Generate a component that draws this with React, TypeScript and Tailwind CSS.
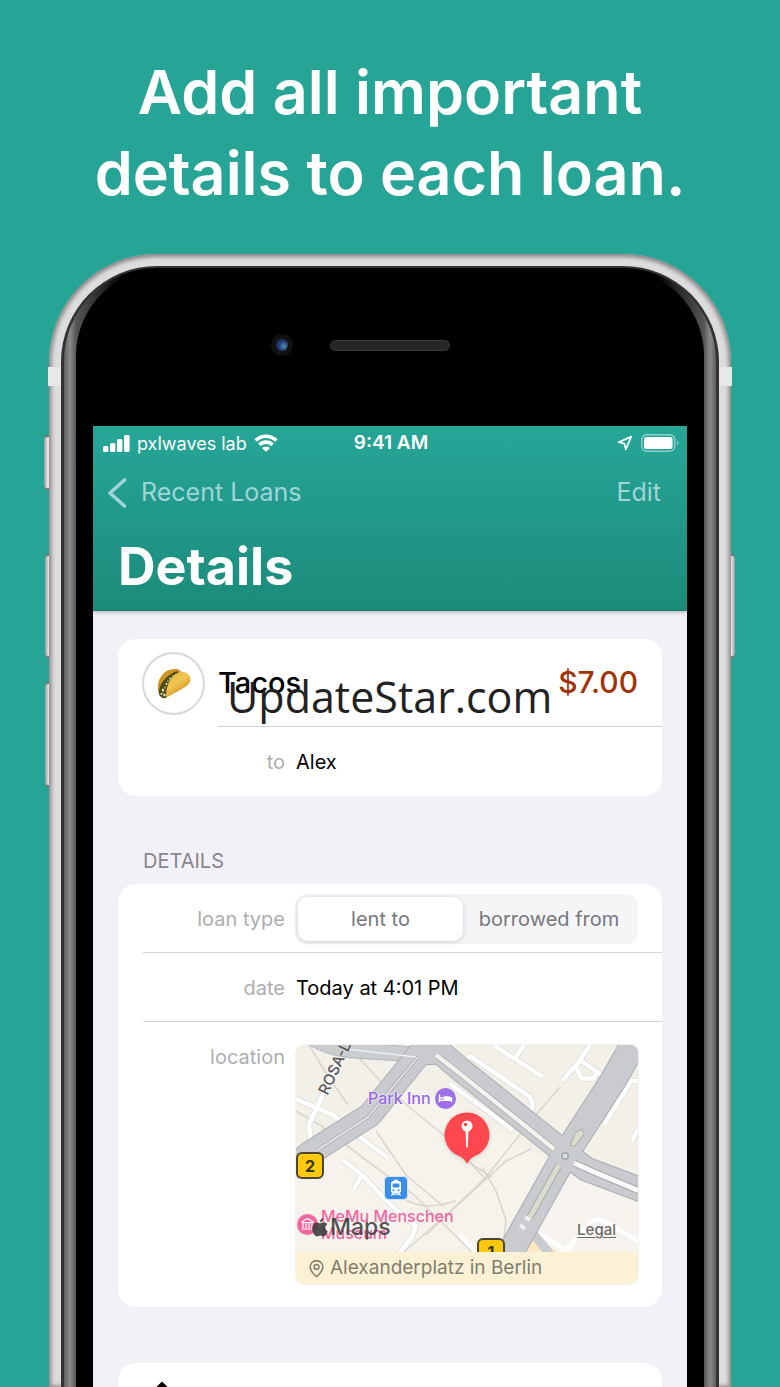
import React, { useState } from 'react';
import { MapPin } from 'lucide-react';

const roads = {
  main: 'M-6 124 L14 108 L74 70 L124 8 L144 7 L164 24 L264 104 L290 124 L348 146',
  cross: 'M344 -12 L318 34 L269 110 L212 212',
};

function SignalIcon() {
  return (
    <svg className="h-[17px] w-[27px]" viewBox="0 0 27 17" fill="#fff" aria-hidden="true">
      <rect x="0" y="11" width="5.4" height="6" rx="1.5" />
      <rect x="7" y="8" width="5.4" height="9" rx="1.5" />
      <rect x="14" y="4" width="5.4" height="13" rx="1.5" />
      <rect x="21" y="0" width="5.6" height="17" rx="1.5" />
    </svg>
  );
}

function WifiIcon() {
  return (
    <svg className="h-[18px] w-6" viewBox="0 0 24 18" aria-hidden="true">
      <g fill="none" stroke="#fff" strokeWidth="3.6">
        <path d="M1.6 6.6 C7.4 .8 16.6 .8 22.4 6.6" />
        <path d="M5.4 10.8 C9.2 7.2 14.8 7.2 18.6 10.8" />
      </g>
      <path d="M12 17.8 L8 13.9 C10 12.2 14 12.2 16 13.9 Z" fill="#fff" />
    </svg>
  );
}

function StatusBar() {
  return (
    <div className="flex h-[34px] items-center pl-2.5 pr-2 text-white">
      <div className="flex flex-1 items-center gap-[7px]">
        <SignalIcon />
        <span className="whitespace-nowrap text-[18px]">pxlwaves lab</span>
        <WifiIcon />
      </div>
      <span className="text-[19px] font-semibold">9:41 AM</span>
      <div className="flex flex-1 items-center justify-end gap-2">
        <svg className="size-4" viewBox="0 0 16 16" fill="none" aria-hidden="true">
          <path d="M14.3 1.6 L1.6 7.2 L7.4 8.6 L8.8 14.4 Z" stroke="#fff" strokeWidth="1.7" strokeLinejoin="round" />
        </svg>
        <svg className="h-[18px] w-[38px]" viewBox="0 0 38 18" aria-hidden="true">
          <rect x=".8" y=".8" width="33" height="16.4" rx="5" fill="none" stroke="#fff" strokeOpacity=".5" strokeWidth="1.4" />
          <rect x="3" y="3" width="28.6" height="12" rx="2.8" fill="#fff" />
          <path d="M36 6.5 C38 7.5 38 10.5 36 11.5 Z" fill="#fff" fillOpacity=".5" />
        </svg>
      </div>
    </div>
  );
}

function TacoIcon() {
  return (
    <svg className="h-8 w-9" viewBox="0 0 36 32" aria-hidden="true">
      <defs>
        <linearGradient id="shell" x1="0" y1="0" x2=".6" y2="1">
          <stop offset="0" stopColor="#e6b23c" />
          <stop offset=".5" stopColor="#f0c650" />
          <stop offset="1" stopColor="#c98718" />
        </linearGradient>
      </defs>
      <path d="M2 22 C1 10 10 1 20 2 C23 2 25 4 26 6 L8 30 C4 30 2 26 2 22 Z" fill="#cf9426" />
      <path d="M3 27 C2 18 10 8 21 4 L24 7 C15 11 14 21 10 31 C7 32 4 30 3 27 Z" fill="#4f4a1c" />
      <g fill="#f4e8bd">
        <circle cx="7" cy="23" r="1.2" />
        <circle cx="8.5" cy="28" r="1.2" />
        <circle cx="10.5" cy="17" r="1" />
        <circle cx="14" cy="11.5" r=".9" />
        <circle cx="5.5" cy="27" r="1" />
      </g>
      <g fill="#7e9a35">
        <circle cx="9" cy="20.5" r="1.3" />
        <circle cx="12" cy="14" r="1.2" />
        <circle cx="6.8" cy="25.4" r=".9" />
        <circle cx="16.5" cy="9" r="1.1" />
      </g>
      <g fill="#a8442a">
        <circle cx="10.5" cy="24" r="1.2" />
        <circle cx="13" cy="17" r="1" />
      </g>
      <path d="M10 31 C10 19 15 6 25 5 C32 4 36 10 34 15 C32 20 18 26 10 31 Z" fill="url(#shell)" />
    </svg>
  );
}

function MapDrawing() {
  return (
    <svg className="absolute inset-0 size-full" viewBox="0 0 342 207" preserveAspectRatio="xMidYMid slice" aria-hidden="true">
      <rect width="342" height="207" fill="#f3f0e8" />
      <path d="M0 110 L60 90 L110 40 L160 60 L250 115 L200 207 L0 207 Z" fill="#f6f3ed" />
      <path d="M270 118 L342 150 V207 H220 Z" fill="#f7f4ef" />
      <path d="M222 207 L236 190 L262 207 Z" fill="#fbe9c4" />

      {/* footpaths */}
      <g fill="none" stroke="#d8d6cf" strokeWidth="1.6">
        <path d="M0 66 L24 80 L74 118 L118 150 L176 207" />
        <path d="M13 0 L30 28 L52 60 M62 12 L88 40 L118 66 L155 96 L190 135" />
        <path d="M264 42 L238 72 L190 132 L130 190" />
        <path d="M235 104 L210 116 L164 158 L108 207" />
        <path d="M174 118 L196 132 M80 86 L110 130 L148 162 M186 122 L200 146 L210 175 L208 192" />
        <path d="M110 155 C124 163 140 162 160 156" />
      </g>

      {/* side streets */}
      <g fill="none" stroke="#dddcd8" strokeWidth="6" strokeLinejoin="round">
        <path d="M0 54 L37 70 L57 87 L91 112" />
        <path d="M15 100 L13 80 L37 27 L54 -6" />
        <path d="M46 114 L66 130 L100 165 L120 181 L116 192 L102 210 M66 130 L58 144" />
        <path d="M197 0 L247 32 M228 0 L220 12" />
        <path d="M167 17 L174 11 L234 52 L237 60 L234 68" />
        <path d="M153 38 L217 85" />
        <path d="M294 0 L282 18 L266 36 M282 14 L306 30 M280 22 L285 33 L297 34 L302 26" />
        <path d="M342 36 L335 36 L308 80 M342 84 L336 96" />
      </g>
      <g fill="none" stroke="#fff" strokeWidth="4.5" strokeLinejoin="round">
        <path d="M0 54 L37 70 L57 87 L91 112" />
        <path d="M15 100 L13 80 L37 27 L54 -6" />
        <path d="M46 114 L66 130 L100 165 L120 181 L116 192 L102 210 M66 130 L58 144" />
        <path d="M197 0 L247 32 M228 0 L220 12" />
        <path d="M167 17 L174 11 L234 52 L237 60 L234 68" />
        <path d="M153 38 L217 85" />
        <path d="M294 0 L282 18 L266 36 M282 14 L306 30 M280 22 L285 33 L297 34 L302 26" />
        <path d="M342 36 L335 36 L308 80 M342 84 L336 96" />
        <path d="M284 110 L342 136" />
        <path d="M240 186 L270 206 L296 176 L304 174 L346 198" />
        <path d="M164 190 L184 212" />
      </g>
      <path d="M232 182 L256 212" stroke="#c9cccf" strokeWidth="9" />

      {/* main roads */}
      <g fill="none" strokeLinejoin="round">
        <path d="M18 -6 C44 8 60 5 84 7 L124 10" stroke="#b1b6bb" strokeWidth="16" />
        <path d="M18 -6 C44 8 60 5 84 7 L124 10" stroke="#cbced1" strokeWidth="14" />
        <path d={roads.cross} stroke="#a9adb2" strokeWidth="27" />
        <path d={roads.main} stroke="#a9adb2" strokeWidth="25" />
        <path d={roads.cross} stroke="#c9cbce" strokeWidth="25" />
        <path d={roads.main} stroke="#c9cbce" strokeWidth="23" />
        <path d="M50 4 L120 12" stroke="#eef0f0" strokeWidth="1.5" />
        <path d="M20 106 L72 72 L122 12" stroke="#9fa4a9" strokeWidth="3" />
        <path d="M20 106 L72 72 L122 12" stroke="#e9ebec" strokeWidth="1.6" />
        <path d="M140 10 L162 27 L258 104" stroke="#a6abaf" strokeWidth="6" />
        <path d="M140 10 L162 27 L258 104" stroke="#f3f2ee" strokeWidth="4.4" />
        <path d="M278 118 L298 127 L346 147" stroke="#a6abaf" strokeWidth="7" />
        <path d="M278 118 L298 127 L346 147" stroke="#fafafa" strokeWidth="5" />
        <path d="M263 120 L234 172" stroke="#a6abaf" strokeWidth="7" />
        <path d="M263 120 L234 172" stroke="#dbdccb" strokeWidth="5" />
        <path d="M274 101 L279 88 L286 84 L288 89 L279 101 Z" fill="#dcddcb" stroke="#a6abaf" />
        <rect x="266" y="108" width="6" height="6" rx="2" fill="#d9dcde" stroke="#a0a5aa" strokeWidth="1.5" />
        <path d="M229 172 L234 175 M224 180 L229 184" stroke="#eef1f2" strokeWidth="4" />
      </g>
    </svg>
  );
}

function RouteBadge({ children }: { children: React.ReactNode }) {
  return (
    <span className="flex h-[27px] w-7 items-center justify-center rounded-md border-2 border-[#4c4633] bg-[#fdc90f] text-[16px] font-bold text-[#3c3724]">
      {children}
    </span>
  );
}

function LoanMap() {
  return (
    <div className="overflow-hidden rounded-lg ring-1 ring-black/5">
      <div className="relative h-[207px] overflow-hidden">
        <MapDrawing />
        <span className="absolute left-[11px] top-3 -rotate-65 whitespace-nowrap text-[15px] font-medium text-[#55565a]">ROSA-L</span>
        <span className="absolute left-[72px] top-[41px] flex items-center gap-1 whitespace-nowrap text-[16px] font-medium text-[#9265e8] [text-shadow:0_0_2px_#fff,0_0_2px_#fff]">
          Park Inn
          <svg className="size-[21px]" viewBox="0 0 21 21" aria-hidden="true">
            <circle cx="10.5" cy="10.5" r="10.5" fill="#9b70e8" />
            <path d="M4.5 6.5 V14 M4.5 12.3 H16.5 V14 M16.5 12 V10 L10 8.6 V12 M5.5 9.8 H9.5" stroke="#fff" strokeWidth="1.5" fill="none" />
            <path d="M9.5 8.6 H14.5 L16.5 10 V12 H9.5 Z" fill="#fff" />
          </svg>
        </span>
        <span className="absolute left-0 top-[107px]"><RouteBadge>2</RouteBadge></span>
        <span className="absolute left-[181px] top-[193px]"><RouteBadge>1</RouteBadge></span>
        <svg className="absolute left-[88px] top-[131px] size-6" viewBox="0 0 24 24" aria-hidden="true">
          <rect x=".5" y=".5" width="23" height="23" rx="4" fill="#3a8eea" stroke="#d7e6f8" />
          <rect x="7" y="5" width="10" height="12" rx="2.5" fill="#fff" />
          <rect x="8.6" y="7.5" width="6.8" height="4" rx=".6" fill="#3a8eea" />
          <circle cx="9.4" cy="14.2" r="1" fill="#3a8eea" />
          <circle cx="14.6" cy="14.2" r="1" fill="#3a8eea" />
          <path d="M9 17 L7.5 19.5 M15 17 L16.5 19.5 M8.5 18.2 H15.5 M10 4.5 H14" stroke="#fff" strokeWidth="1.3" />
        </svg>
        <svg className="absolute left-[145px] top-[63px] h-[62px] w-[52px] drop-shadow-sm" viewBox="0 0 52 62" aria-hidden="true">
          <path d="M26 56 C24 52 22 50 18 48 A22.5 22.5 0 1 1 34 48 C30 50 28 52 26 56 Z" fill="#fe484f" />
          <circle cx="26" cy="18" r="5.5" fill="#fff" />
          <circle cx="24.5" cy="16.5" r="1.8" fill="#fe484f" />
          <path d="M24.6 23 H27.4 L26.8 39 L26 40 L25.2 39 Z" fill="#fff" />
        </svg>
        <svg className="absolute left-px top-[169px] size-[21px]" viewBox="0 0 21 21" aria-hidden="true">
          <circle cx="10.5" cy="10.5" r="10.5" fill="#f2679f" />
          <path d="M4.5 8 L10.5 4.5 L16.5 8 M4.5 8.5 H16.5 M6 9 V14 M9 9 V14 M12 9 V14 M15 9 V14 M4.5 15 H16.5" stroke="#fff" strokeWidth="1.2" fill="none" />
        </svg>
        <span className="absolute left-[25px] top-[163px] w-36 text-[16px] font-medium leading-[17px] text-[#f067a0]">
          MeMu Menschen Museum
        </span>
        <span className="absolute left-4 top-[168px] flex items-center gap-0.5 text-[23px] font-medium leading-7 text-[#3e3e40]/90">
          <svg className="h-[19px] w-4" viewBox="0 0 16 19" fill="currentColor" aria-hidden="true">
            <path d="M8 5.2 C9.2 5.2 10.4 4.2 12 4.3 C13.3 4.4 14.6 5 15.3 6.2 C12.2 8.2 12.8 12 15.8 13.3 C15 15.8 13.2 18.4 11.6 18.4 C10.2 18.4 9.8 17.6 8.3 17.6 C6.7 17.6 6.2 18.4 4.9 18.4 C2.7 18.4 .2 14.2 .2 10.5 C.2 6.8 2.4 4.4 4.9 4.4 C6.2 4.4 7.2 5.2 8 5.2 Z" />
            <path d="M7.9 4.2 C7.7 2.2 9.4 .4 11.3 .1 C11.5 2.3 9.8 4.1 7.9 4.2 Z" />
          </svg>
          Maps
        </span>
        <a href="#legal" className="absolute right-[22px] top-[174px] text-[15px] font-medium text-[#6b6b6b] underline underline-offset-2">
          Legal
        </a>
      </div>
      <div className="flex h-8 items-center gap-1 whitespace-nowrap bg-[#fbf2d6] pl-[11px] text-[19px] text-[#827d6e]">
        <MapPin className="size-[19px]" strokeWidth={2} />
        Alexanderplatz in Berlin
      </div>
    </div>
  );
}

function LoanTypePicker() {
  const [type, setType] = useState('lent to');

  return (
    <div className="flex h-[50px] flex-1 rounded-xl bg-[#f5f5f8] p-[3px]">
      {['lent to', 'borrowed from'].map((option) => (
        <button
          key={option}
          type="button"
          aria-pressed={type === option}
          onClick={() => setType(option)}
          className={`whitespace-nowrap rounded-[10px] text-[20px] text-[#77777b] ${
            option === 'lent to' ? 'flex-1' : 'w-[172px]'
          } ${type === option ? 'bg-white shadow-[0_1px_5px_rgba(0,0,0,0.16)]' : ''}`}
        >
          {option}
        </button>
      ))}
    </div>
  );
}

function Screen() {
  return (
    <div className="relative min-h-full bg-[#f1f1f7]">
      <header className="h-[185px] border-b border-[#1a7d70] bg-linear-to-b from-[#26a697] to-[#1c8b7b] shadow-[0_1px_4px_rgba(0,0,0,0.3)]">
        <StatusBar />
        <nav className="flex h-[66px] items-center justify-between pl-3.5 pr-[26px] text-[25px] text-[#9fd5d6]">
          <button type="button" className="flex items-center gap-3.5">
            <svg className="h-8 w-5" viewBox="0 0 20 32" fill="none" aria-hidden="true">
              <path d="M17.5 3 L3 16 L17.5 29" stroke="currentColor" strokeWidth="3.6" strokeLinecap="round" strokeLinejoin="round" />
            </svg>
            Recent Loans
          </button>
          <button type="button">Edit</button>
        </nav>
        <h2 className="px-[25px] pt-[9px] text-[52px] font-bold leading-[64px] text-white">Details</h2>
      </header>

      <main className="px-[25px] text-[20px] text-black">
        <section className="mt-7 rounded-[18px] bg-white">
          <div className="flex h-[88px] items-center pl-6">
            <div className="flex size-[63px] shrink-0 items-center justify-center rounded-full border-2 border-[#d9d9dc]">
              <TacoIcon />
            </div>
            <div className="ml-[13px] flex h-full flex-1 items-center justify-between border-b border-[#d3d3d5] pr-6 font-medium">
              <span className="text-[29px]">Tacos</span>
              <span className="text-[30px] text-[#a13308]">$7.00</span>
            </div>
          </div>
          <div className="flex h-[69px] items-center gap-[11px] pl-[25px]">
            <span className="w-[142px] text-right text-[#adadb0]">to</span>
            <span>Alex</span>
          </div>
        </section>

        <h3 className="pl-[25px] pt-[52px] text-[20px] leading-[27px] text-[#87878c]">DETAILS</h3>
        <section className="mt-[9px] rounded-[18px] bg-white pb-[23px] pl-[25px]">
          <div className="flex h-[69px] items-center gap-[10px] border-b border-[#d3d3d5] pr-6 pt-0.5">
            <span className="w-[142px] text-right text-[#adadb0]">loan type</span>
            <LoanTypePicker />
          </div>
          <div className="flex h-[69px] items-center gap-[11px] border-b border-[#d3d3d5] pr-6 pt-0.5">
            <span className="w-[142px] text-right text-[#adadb0]">date</span>
            <span>Today at 4:01 PM</span>
          </div>
          <div className="flex gap-[11px] pr-6 pt-[23px]">
            <span className="w-[142px] text-right leading-6 text-[#adadb0]">location</span>
            <div className="min-w-0 flex-1">
              <LoanMap />
            </div>
          </div>
        </section>

        <section className="mt-14 h-24 rounded-[18px] bg-white pl-[30px] pt-[18px]">
          <svg className="h-[31px] w-7" viewBox="0 0 28 31" fill="none" stroke="#000" strokeWidth="3" aria-hidden="true">
            <path d="M14 23 V3 M8 8.5 L14 2.5 L20 8.5 M9 11 H3 V29 H25 V11 H19" />
          </svg>
        </section>
      </main>

      <p className="pointer-events-none absolute left-[134px] top-[241px] whitespace-nowrap font-['Open_Sans',sans-serif] text-[43px] leading-[60px] text-[#222]">
        UpdateStar.com
      </p>
    </div>
  );
}

function Phone() {
  return (
    <div className="relative ml-12 mr-[49px] mt-10 flex min-h-0 flex-1 flex-col">
      <span className="absolute -left-1 top-[181px] h-[55px] w-2 rounded-l-sm border-y-2 border-[#777] bg-linear-to-r from-[#999] via-[#eee] to-[#aaa]" />
      <span className="absolute -left-[3px] top-[300px] h-[104px] w-2 rounded-l-sm border-y-2 border-[#777] bg-linear-to-r from-[#999] via-[#eee] to-[#aaa]" />
      <span className="absolute -left-[3px] top-[428px] h-[105px] w-2 rounded-l-sm border-y-2 border-[#777] bg-linear-to-r from-[#999] via-[#eee] to-[#aaa]" />
      <span className="absolute -right-1 top-[300px] h-[104px] w-2 rounded-r-sm border-y-2 border-[#777] bg-linear-to-r from-[#aaa] via-[#eee] to-[#999]" />

      <div className="relative ml-px flex min-h-0 flex-1 flex-col rounded-t-[108px] bg-[#dedddd] px-3 pt-3 shadow-[inset_0_2px_5px_#8a8587,inset_2px_0_5px_#9a9698,inset_-2px_0_5px_#9a9698]">
        <span className="absolute -left-px top-[113px] h-[19px] w-[13px] bg-[#e9e8e9]" />
        <span className="absolute -right-px top-[113px] h-[19px] w-[13px] bg-[#e9e8e9]" />
        <div className="flex min-h-0 flex-1 flex-col rounded-t-[96px] bg-[#323232] px-[3px] pt-0.5">
          <div className="flex min-h-0 flex-1 flex-col rounded-t-[93px] bg-[linear-gradient(to_right,#5e5e5e,#8b8b8b_6px,#555_12px,#000_60px,#000_calc(100%-60px),#555_calc(100%-12px),#8b8b8b_calc(100%-6px),#5e5e5e)] px-3">
            <div className="flex min-h-0 flex-1 flex-col rounded-t-[88px] bg-black px-[17px]">
              <div className="relative flex h-[158px] shrink-0 justify-center pt-[72px]">
                <span className="absolute left-[178px] top-[66px] flex size-[22px] items-center justify-center rounded-full bg-[#111114]">
                  <span className="size-3 rounded-full bg-[radial-gradient(circle_at_65%_60%,#4d8db4,#253d78_45%,#17233f)]" />
                </span>
                <span className="h-[11px] w-[120px] rounded-full border border-[#3a3738] bg-[#282627]" />
              </div>
              <div className="min-h-0 flex-1 overflow-hidden">
                <Screen />
              </div>
            </div>
          </div>
        </div>
      </div>
    </div>
  );
}

export default function App() {
  return (
    <div className="flex h-screen flex-col overflow-hidden bg-[#26a495] font-['Inter','Liberation_Sans',sans-serif]">
      <h1 className="px-6 pt-[52px] text-center text-[61px] font-semibold leading-[81px] text-white">
        Add all important
        <br />
        details to each loan.
      </h1>
      <Phone />
    </div>
  );
}
